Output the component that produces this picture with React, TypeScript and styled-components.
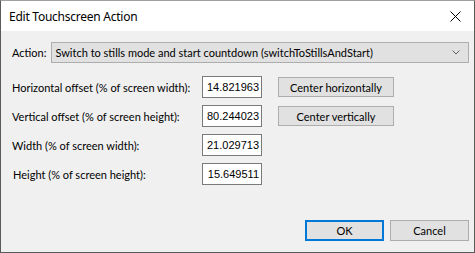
import React from "react";
import styled, { createGlobalStyle } from "styled-components";

const Global = createGlobalStyle`
  html, body { margin: 0; padding: 0; background: #ffffff; }
  * { box-sizing: border-box; }
`;

const Window = styled.div`
  width: 475px;
  height: 253px;
  display: flex;
  flex-direction: column;
  border: 1px solid #5a5a5a;
  border-top-color: #a0a0a0;
  background: #f0f0f0;
  font-family: Lato, "Liberation Sans", Arial, sans-serif;
  font-size: 11px;
  color: #000;
  overflow: hidden;
`;

const TitleBar = styled.div`
  height: 30px;
  flex: none;
  background: #ffffff;
  display: flex;
  align-items: center;
  justify-content: space-between;
  padding-left: 8px;
  padding-right: 13px;
`;

const Title = styled.span`
  font-family: "Noto Sans", "Open Sans", sans-serif;
  font-size: 12px;
  letter-spacing: -0.25px;
  color: #000;
  margin-top: 1px;
`;

const Body = styled.div`
  flex: 1;
  display: flex;
  flex-direction: column;
  padding: 11px 5px 11px 11px;
`;

const ActionRow = styled.div`
  display: flex;
  align-items: center;
  gap: 5px;
  height: 21px;
`;

const Label = styled.span<{ $indent?: number }>`
  white-space: nowrap;
  padding-left: ${(p) => p.$indent ?? 0}px;
`;

const Combo = styled.div`
  flex: 1;
  height: 21px;
  border: 1px solid #adadad;
  background: #e1e1e1;
  display: flex;
  align-items: center;
  justify-content: space-between;
  padding: 0 8px 0 3px;
`;

const Form = styled.div`
  display: grid;
  grid-template-columns: 190px 60px 132px;
  row-gap: 7px;
  margin-top: 13px;
  align-items: center;
`;

const TextBox = styled.div`
  height: 22px;
  border: 1px solid #7a7a7a;
  background: #ffffff;
  display: flex;
  align-items: center;
  justify-content: flex-end;
  padding-right: 2px;
  font-family: "Liberation Sans", Arial, sans-serif;
  font-size: 11px;
`;

const SideButton = styled.div`
  margin-left: 16px;
  width: 116px;
  height: 20px;
  border: 1px solid #adadad;
  background: #e1e1e1;
  display: flex;
  align-items: center;
  justify-content: center;
`;

const Spacer = styled.div``;

const Footer = styled.div`
  margin-top: auto;
  display: flex;
  justify-content: flex-end;
  gap: 6px;
`;

const DialogButton = styled.div<{ $default?: boolean }>`
  width: 79px;
  height: 21px;
  border: ${(p) => (p.$default ? "2px solid #0078d7" : "1px solid #adadad")};
  background: #e1e1e1;
  display: flex;
  align-items: center;
  justify-content: center;
`;

const rows = [
  { label: "Horizontal offset (% of screen width):", value: "14.821963", button: "Center horizontally", indent: 0 },
  { label: "Vertical offset (% of screen height):", value: "80.244023", button: "Center vertically", indent: 0 },
  { label: "Width (% of screen width):", value: "21.029713", button: null, indent: 0 },
  { label: "Height (% of screen height):", value: "15.649511", button: null, indent: 1 },
];

export default function App() {
  return (
    <>
      <Global />
      <Window>
        <TitleBar>
          <Title>Edit Touchscreen Action</Title>
          <svg width="11" height="11" viewBox="0 0 11 11">
            <path d="M0.5 0.5 L10.5 10.5 M10.5 0.5 L0.5 10.5" stroke="#000" strokeWidth="1" fill="none" />
          </svg>
        </TitleBar>
        <Body>
          <ActionRow>
            <Label>Action:</Label>
            <Combo>
              <span>Switch to stills mode and start countdown (switchToStillsAndStart)</span>
              <svg width="8" height="5" viewBox="0 0 8 5">
                <path d="M0.5 0.5 L4 4 L7.5 0.5" stroke="#606060" strokeWidth="1" fill="none" />
              </svg>
            </Combo>
          </ActionRow>
          <Form>
            {rows.map((r) => (
              <React.Fragment key={r.label}>
                <Label $indent={r.indent}>{r.label}</Label>
                <TextBox>{r.value}</TextBox>
                {r.button ? <SideButton>{r.button}</SideButton> : <Spacer />}
              </React.Fragment>
            ))}
          </Form>
          <Footer>
            <DialogButton $default>OK</DialogButton>
            <DialogButton>Cancel</DialogButton>
          </Footer>
        </Body>
      </Window>
    </>
  );
}
